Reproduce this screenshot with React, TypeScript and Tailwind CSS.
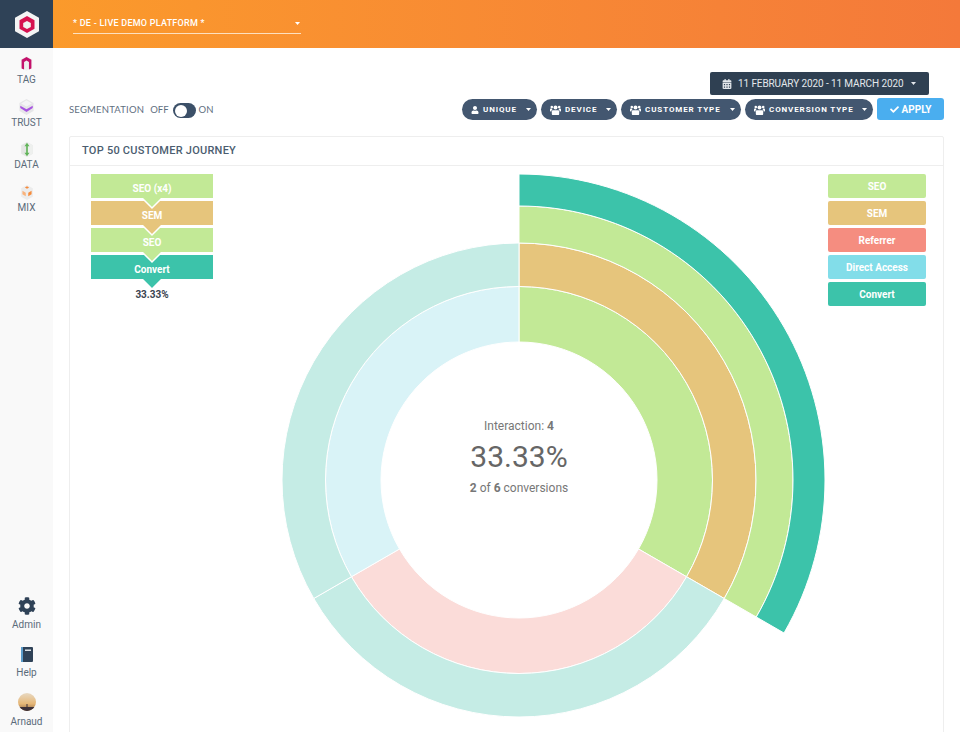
import { FaCalendarAlt, FaCheck, FaCog, FaUser } from "react-icons/fa";

const CX = 306;
const CY = 306;

const polar = (r: number, deg: number) => {
  const a = (deg * Math.PI) / 180;
  return [CX + r * Math.sin(a), CY - r * Math.cos(a)];
};

const arc = (r0: number, r1: number, from: number, to: number) => {
  const [x0, y0] = polar(r1, from);
  const [x1, y1] = polar(r1, to);
  const [x2, y2] = polar(r0, to);
  const [x3, y3] = polar(r0, from);
  return `M${x0} ${y0}A${r1} ${r1} 0 0 1 ${x1} ${y1}L${x2} ${y2}A${r0} ${r0} 0 0 0 ${x3} ${y3}Z`;
};

const segments = [
  { r0: 138, r1: 193.5, from: 0, to: 120, fill: "#c2e996" },
  { r0: 138, r1: 193.5, from: 120, to: 240, fill: "#fbdcd9" },
  { r0: 138, r1: 193.5, from: 240, to: 360, fill: "#d9f3f7" },
  { r0: 193.5, r1: 237, from: 0, to: 120, fill: "#e6c57c" },
  { r0: 193.5, r1: 237, from: 120, to: 240, fill: "#c5ece5" },
  { r0: 193.5, r1: 237, from: 240, to: 360, fill: "#c5ece5" },
  { r0: 237, r1: 274, from: 0, to: 120, fill: "#c2e996" },
  { r0: 274, r1: 306, from: 0, to: 120, fill: "#3cc3aa" },
];

const journey = [
  { label: "SEO (x4)", bg: "bg-[#c2e996]", fill: "#c2e996" },
  { label: "SEM", bg: "bg-[#e6c57c]", fill: "#e6c57c" },
  { label: "SEO", bg: "bg-[#c2e996]", fill: "#c2e996" },
  { label: "Convert", bg: "bg-[#3cc3aa]", fill: "#3cc3aa" },
];

const legend = [
  { label: "SEO", bg: "bg-[#c2e996]" },
  { label: "SEM", bg: "bg-[#e6c57c]" },
  { label: "Referrer", bg: "bg-[#f58d80]" },
  { label: "Direct Access", bg: "bg-[#82dde9]" },
  { label: "Convert", bg: "bg-[#3cc3aa]" },
];

const Caret = ({ className }: { className?: string }) => (
  <svg width="5" height="3" viewBox="0 0 5 3" className={className}>
    <path d="M0 0h5L2.5 3z" fill="currentColor" />
  </svg>
);

const UsersIcon = () => (
  <svg width="11" height="10" viewBox="0 0 11 10" fill="currentColor">
    <circle cx="5.5" cy="2.6" r="2" />
    <path d="M3 5.2h5c.8 0 1.2.6 1.2 1.4V9c0 .5-.4 1-1 1H2.800c-.6 0-1-.5-1-1V6.600c0-.8.4-1.400 1.200-1.400z" />
    <circle cx="1.800" cy="2" r="1.300" />
    <circle cx="9.200" cy="2" r="1.300" />
    <path d="M0 4.600c0-.6.4-1 1-1h1.200c-.2.400 0 1 .2 1.200-.6.200-1 .7-1.100 1.700H.6C.2 6.500 0 6.200 0 5.800zM11 4.600c0-.6-.4-1-1-1H8.800c.2.400 0 1-.2 1.200.6.200 1 .7 1.100 1.700h.7c.4 0 .6-.3.6-.7z" />
  </svg>
);

const BookIcon = () => (
  <svg width="12" height="15" viewBox="0 0 12 15">
    <rect x="0" y="0" width="12" height="15" rx="1" fill="#2f4257" />
    <rect x="0" y="0" width="2" height="15" fill="#5b9bc9" />
    <rect x="4" y="2.500" width="6" height="1.500" fill="#dfe5ea" />
  </svg>
);

const Logo = () => (
  <svg width="24" height="27" viewBox="0 0 24 27">
    <path d="M12 0L24 6.700V20.300L12 27L0 20.300V6.700z" fill="#f4f4f4" />
    <path d="M12 5L19.500 9.200V17.800L12 22L4.500 17.800V9.200z" fill="#d6114f" />
    <path d="M12 10L15.800 12V16L12 18L8.200 16V12z" fill="#f1f1f1" />
  </svg>
);

const TagIcon = () => (
  <svg width="13" height="15" viewBox="0 0 16 18">
    <path d="M8 0L15 4V14L8 18L1 14V4z" fill="#eeeeee" />
    <path d="M8 1L14 4.500V15L11 16.500V7L8 5.200L5 7V16.500L2 15V4.500z" fill="#c4116b" />
  </svg>
);

const TrustIcon = () => (
  <svg width="17" height="16" viewBox="0 0 18 18">
    <path d="M9 0L17 4.500V13.500L9 18L1 13.500V4.500z" fill="#e6e6e8" />
    <path d="M9 1.500L15 5L9 8.500L3 5z" fill="#f5f5f6" />
    <path d="M2 7.500L9 11.500L16 7.500V10L9 14.500L2 10z" fill="#a855e0" />
  </svg>
);

const DataIcon = () => (
  <svg width="14" height="15" viewBox="0 0 16 18">
    <path d="M8 0L15 4V14L8 18L1 14V4z" fill="#e4e6e4" />
    <path d="M8 0L15 4V14L8 18z" fill="#eef0ee" />
    <path d="M8 1L11 5H9V13H11L8 17L5 13H7V5H5z" fill="#62b45a" />
  </svg>
);

const MixIcon = () => (
  <svg width="14" height="15" viewBox="0 0 16 18">
    <path d="M8 0L15 4V14L8 18L1 14V4z" fill="#ececec" />
    <path d="M8 1.500L10.500 3L8 4.500L5.500 3z" fill="#f58b3b" />
    <path d="M2.500 7L6.500 9.300V13.500L2.500 11.200z" fill="#f9b27a" />
    <path d="M13.500 7L9.500 9.300V13.500L13.500 11.200z" fill="#f58b3b" />
  </svg>
);

const Avatar = () => (
  <svg width="18" height="18" viewBox="0 0 18 18">
    <defs>
      <linearGradient id="sky" x1="0" y1="0" x2="0" y2="1">
        <stop offset="0" stopColor="#e8d9c2" />
        <stop offset="0.6" stopColor="#e6b777" />
        <stop offset="1" stopColor="#8a6240" />
      </linearGradient>
    </defs>
    <circle cx="9" cy="9" r="9" fill="url(#sky)" />
    <path d="M1.600 14H16.400A9 9 0 0 1 1.600 14z" fill="#3c3038" />
    <path d="M8.500 11h1v3h-1z" fill="#3c3038" />
  </svg>
);

const navTop = [
  { label: "TAG", icon: <TagIcon />, pad: "pt-[8px]", gap: "mt-[3px]" },
  { label: "TRUST", icon: <TrustIcon />, pad: "pt-[13px]", gap: "mt-[2px]" },
  { label: "DATA", icon: <DataIcon />, pad: "pt-[13px]", gap: "mt-[2px]" },
  { label: "MIX", icon: <MixIcon />, pad: "pt-[14px]", gap: "mt-[2px]" },
];

const filters = [
  { label: "UNIQUE", icon: <FaUser className="w-[8px] h-[8px]" />, box: "w-[75px] pl-[5px]", iconBox: "w-[16px]" },
  { label: "DEVICE", icon: <UsersIcon />, box: "w-[76px] pl-[5px]", iconBox: "w-[19px]" },
  { label: "CUSTOMER TYPE", icon: <UsersIcon />, box: "w-[120px] pl-[5px]", iconBox: "w-[19px]" },
  { label: "CONVERSION TYPE", icon: <UsersIcon />, box: "w-[128px] pl-[5px]", iconBox: "w-[19px]" },
];

export default function App() {
  return (
    <div className="w-[960px] h-[732px] overflow-hidden bg-white font-['Roboto',sans-serif]">
      {/* Header */}
      <div className="flex h-12">
        <div className="w-[53px] bg-[#2f4257] flex items-center justify-center">
          <Logo />
        </div>
        <div className="flex-1 bg-gradient-to-r from-[#fb9a2b] to-[#f4793a] pl-5 pt-[14px]">
          <div className="w-[228px] h-[20px] border-b border-[#fde0c0] flex items-center justify-between text-white text-[9px] font-medium pr-[1px]">
            <span className="tracking-[0.25px]">* DE - LIVE DEMO PLATFORM *</span>
            <Caret className="text-white" />
          </div>
        </div>
      </div>

      <div className="flex h-[684px]">
        {/* Sidebar */}
        <div className="w-[53px] bg-[#f9f9f9] flex flex-col justify-between items-center text-[#5b6b7a]">
          <div className="flex flex-col items-center text-[10px] leading-[12px]">
            {navTop.map((n) => (
              <div key={n.label} className={`flex flex-col items-center ${n.pad}`}>
                {n.icon}
                <span className={n.gap}>{n.label}</span>
              </div>
            ))}
          </div>
          <div className="flex flex-col items-center text-[10px] leading-[12px] pb-[4px]">
            <FaCog className="w-[18px] h-[18px] text-[#2f4257]" />
            <span className="mt-[4px]">Admin</span>
            <div className="mt-[16px] flex">
              <BookIcon />
            </div>
            <span className="mt-[5px]">Help</span>
            <div className="mt-[14px] flex">
              <Avatar />
            </div>
            <span className="mt-[5px]">Arnaud</span>
          </div>
        </div>

        {/* Main */}
        <div className="flex-1 min-w-0">
          <div className="flex justify-end pr-[31px] pt-6">
            <div className="w-[219px] h-[23px] rounded-[2px] bg-[#2f4052] text-[#e4e8ec] text-[10px] flex items-center pl-[12px]">
              <FaCalendarAlt className="w-[10px] h-[10px]" />
              <span className="ml-[6px] tracking-[-0.1px] whitespace-nowrap">11 FEBRUARY 2020 - 11 MARCH 2020</span>
              <Caret className="ml-[8px]" />
            </div>
          </div>

          <div className="flex items-center justify-between pl-4 pr-4 mt-[3px] h-[22px]">
            <div className="flex items-center text-[9.5px] text-[#5f6f7f] font-['Lato',sans-serif] pt-[3px]">
              <span className="tracking-[0.2px]">SEGMENTATION</span>
              <span className="ml-[6px]">OFF</span>
              <div className="ml-1 w-[23px] h-[15px] rounded-full bg-[#3c5068] flex items-center pl-[2px]">
                <div className="w-[12px] h-[12px] rounded-full bg-white" />
              </div>
              <span className="ml-[3px]">ON</span>
            </div>
            <div className="flex items-center gap-1">
              {filters.map((f) => (
                <div
                  key={f.label}
                  className={`${f.box} h-[21px] rounded-full bg-[#435770] text-white text-[8px] font-bold tracking-[0.9px] flex items-center pr-[6px] pt-[1px]`}
                >
                  <span className={`${f.iconBox} flex justify-center`}>{f.icon}</span>
                  <span className="whitespace-nowrap">{f.label}</span>
                  <Caret className="ml-auto" />
                </div>
              ))}
              <div className="w-[67px] h-[22px] rounded-[3px] bg-[#4aaeef] text-white text-[10px] font-bold flex items-center justify-center gap-[3px]">
                <FaCheck className="w-[9px] h-[9px]" />
                <span>APPLY</span>
              </div>
            </div>
          </div>

          {/* Card */}
          <div className="ml-4 mr-4 mt-[16px] border border-[#eeeeee] rounded-[2px] h-[640px]">
            <div className="h-[29px] border-b border-[#eeeeee] flex items-center pl-[12px] text-[11px] font-medium text-[#4b5d70] tracking-[0.25px]">
              TOP 50 CUSTOMER JOURNEY
            </div>
            <div className="flex pl-[21px] pr-[17px] pt-[8px]">
              <div className="w-[122px] shrink-0 flex flex-col gap-[3px] text-white text-[10px] font-bold">
                {journey.map((j) => (
                  <div key={j.label + j.fill} className={`relative h-6 ${j.bg} flex items-center justify-center pt-[4px]`}>
                    <svg width="24" height="12" viewBox="0 0 24 12" className="absolute left-[49px] top-[24px] z-10">
                      <path d="M2 0L12 10L22 0" fill={j.fill} stroke="#ffffff" strokeWidth="1.5" />
                    </svg>
                    <span className="relative z-20">{j.label}</span>
                  </div>
                ))}
                <div className="text-center text-[#3a4450] mt-[7px] leading-[12px]">33.33%</div>
              </div>

              <div className="relative w-[612px] h-[612px] shrink-0">
                <svg width="612" height="612" viewBox="0 0 612 612">
                  {segments.map((s) => (
                    <path
                      key={`${s.r0}-${s.from}`}
                      d={arc(s.r0, s.r1, s.from, s.to)}
                      fill={s.fill}
                      stroke="#ffffff"
                      strokeWidth="1"
                    />
                  ))}
                </svg>
                <div className="absolute left-0 right-0 top-[244px] text-center text-[#777777] text-[12px] leading-[16px]">
                  Interaction: <b className="font-bold">4</b>
                </div>
                <div className="absolute left-0 right-0 top-[264px] text-center text-[#666666] text-[30px] leading-[38px]">
                  33.33%
                </div>
                <div className="absolute left-0 right-0 top-[306px] text-center text-[#777777] text-[12px] leading-[16px]">
                  <b className="font-bold">2</b> of <b className="font-bold">6</b> conversions
                </div>
              </div>

              <div className="w-[98px] shrink-0 ml-auto flex flex-col gap-[3px] text-white text-[10px] font-bold">
                {legend.map((l) => (
                  <div key={l.label} className={`h-6 rounded-[2px] ${l.bg} flex items-center justify-center`}>
                    {l.label}
                  </div>
                ))}
              </div>
            </div>
          </div>
        </div>
      </div>
    </div>
  );
}
